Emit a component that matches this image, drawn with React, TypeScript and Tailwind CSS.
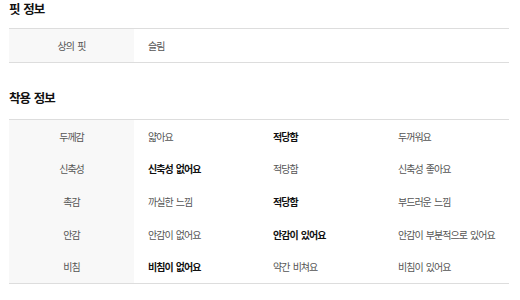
import React from "react";

const font = { fontFamily: '"Noto Sans CJK KR", "Noto Sans", sans-serif' };

type Cell = { t: string; b?: boolean };

const fitRows: { label: string; cells: Cell[] }[] = [
  { label: "상의 핏", cells: [{ t: "슬림" }] },
];

const wearRows: { label: string; cells: Cell[] }[] = [
  { label: "두께감", cells: [{ t: "얇아요" }, { t: "적당함", b: true }, { t: "두꺼워요" }] },
  { label: "신축성", cells: [{ t: "신축성 없어요", b: true }, { t: "적당함" }, { t: "신축성 좋아요" }] },
  { label: "촉감", cells: [{ t: "까실한 느낌" }, { t: "적당함", b: true }, { t: "부드러운 느낌" }] },
  { label: "안감", cells: [{ t: "안감이 없어요" }, { t: "안감이 있어요", b: true }, { t: "안감이 부분적으로 있어요" }] },
  { label: "비침", cells: [{ t: "비침이 없어요", b: true }, { t: "약간 비쳐요" }, { t: "비침이 있어요" }] },
];

function Row({ label, cells, h }: { label: string; cells: Cell[]; h: string }) {
  return (
    <div className={`flex ${h}`}>
      <div className="w-[125px] shrink-0 bg-[#f8f8f8] flex items-center justify-center text-[10px] text-[#555] tracking-[-1px] [word-spacing:2px]">
        {label}
      </div>
      {cells.length === 1 ? (
        <div className="flex-1 flex items-center pl-[14px] text-[10px] text-[#555] tracking-[-1px] [word-spacing:2px]">
          {cells[0].t}
        </div>
      ) : (
        <div className="flex-1 grid grid-cols-3">
          {cells.map((c, i) => (
            <div
              key={i}
              className={`flex items-center pl-[14px] text-[10px] tracking-[-1px] [word-spacing:2px] whitespace-nowrap ${
                c.b ? "font-bold text-[#111]" : "text-[#555]"
              }`}
            >
              {c.t}
            </div>
          ))}
        </div>
      )}
    </div>
  );
}

export default function App() {
  return (
    <div className="w-[520px] h-[300px] bg-white px-[9px] pt-0" style={font}>
      <h3 className="text-[12.5px] leading-[17px] font-bold text-[#111] tracking-[-1px] [word-spacing:2px] mb-[11px]">핏 정보</h3>
      <div className="w-[500px] border-t border-b border-[#dddddd]">
        {fitRows.map((r) => (
          <Row key={r.label} label={r.label} cells={r.cells} h="h-[33px]" />
        ))}
      </div>
      <h3 className="text-[12.5px] leading-[17px] font-bold text-[#111] tracking-[-1px] [word-spacing:2px] mt-[26px] mb-[13px]">착용 정보</h3>
      <div className="w-[500px] border-t border-b border-[#dddddd]">
        {wearRows.map((r) => (
          <Row key={r.label} label={r.label} cells={r.cells} h="h-[32.6px]" />
        ))}
      </div>
    </div>
  );
}
